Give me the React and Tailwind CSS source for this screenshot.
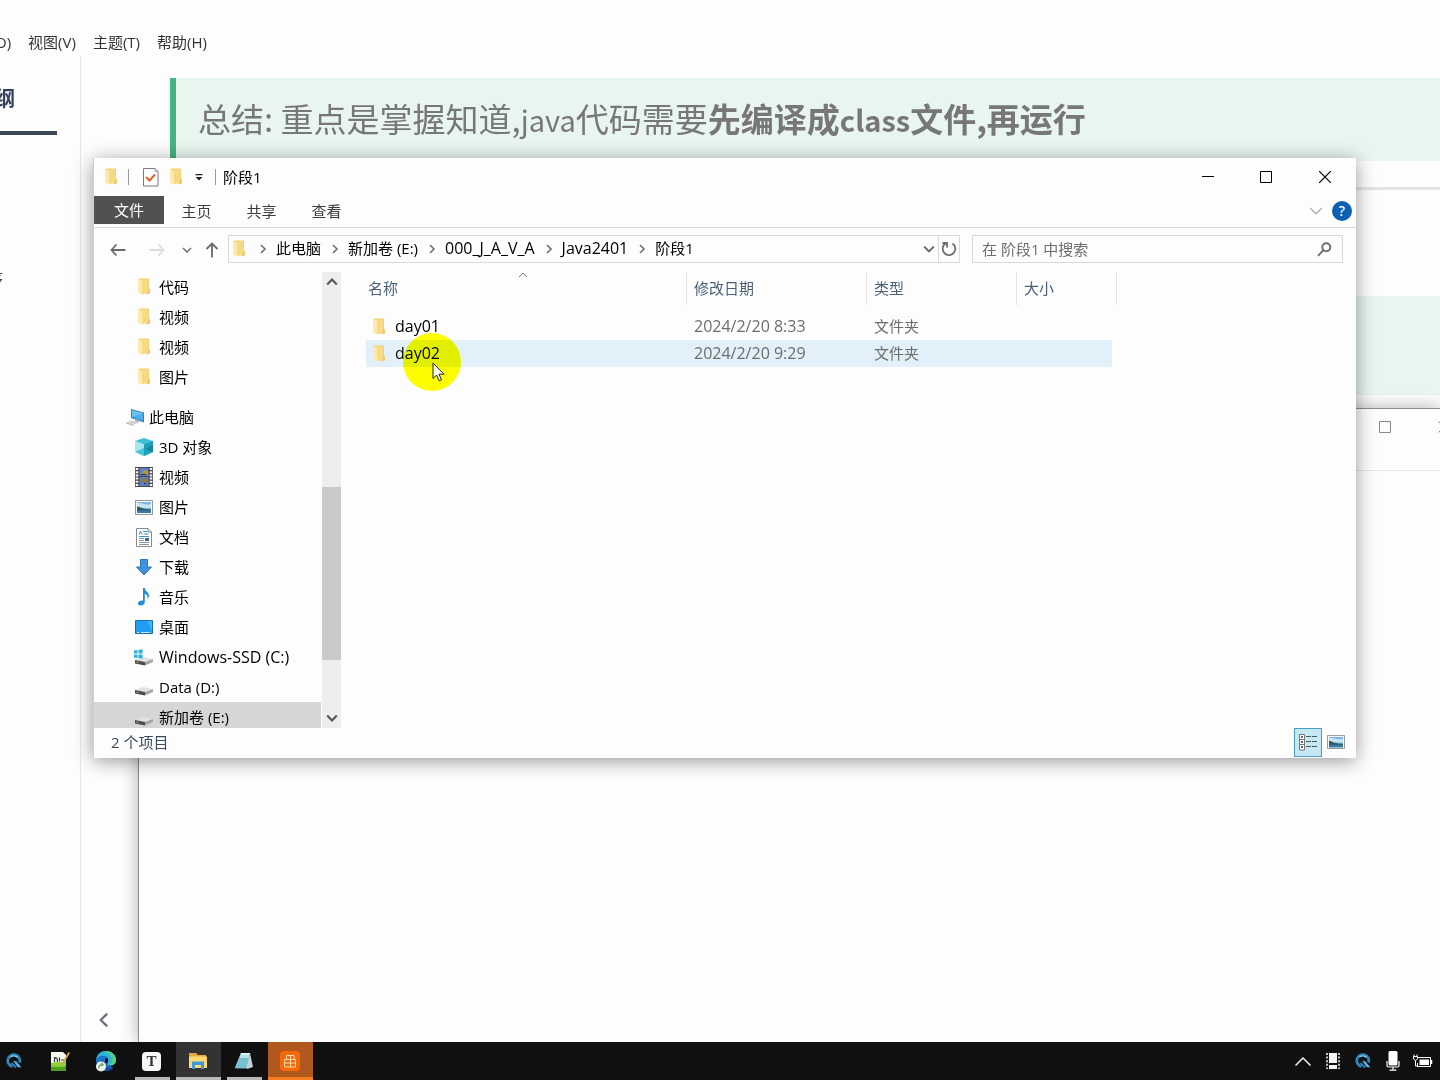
import React from "react";

const cjk = "font-['Noto_Sans_CJK_SC',sans-serif]";
const ui = "font-['Open_Sans','Noto_Sans_CJK_SC',sans-serif]";

function Folder({ className = "" }) {
  return (
    <svg className={`shrink-0 ${className}`} width="16" height="18" viewBox="0 0 16 18" aria-hidden="true">
      <path d="M3 .5h10V15H3z" fill="#efd27a" />
      <path d="M12 10.500l2 1v4l-4 1z" fill="#ecc968" />
      <path d="M2 .5l4 2.500v13.500l-4-2z" fill="#ffe9ac" />
      <path d="M6 3l1-1.500h5v13l-6 2z" fill="#f7da84" />
    </svg>
  );
}

function Chevron({ dir = "right", size = 10, color = "#666", w = 1.6, className = "" }) {
  const d = { right: "M3 1l4 4-4 4", down: "M1 3l4 4 4-4", up: "M1 7l4-4 4 4", left: "M7 1L3 5l4 4" }[dir];
  return (
    <svg className={`shrink-0 ${className}`} width={size} height={size} viewBox="0 0 10 10" fill="none" stroke={color} strokeWidth={w} aria-hidden="true">
      <path d={d} />
    </svg>
  );
}

function PcIcon() {
  return (
    <svg width="20" height="18" viewBox="0 0 20 18" aria-hidden="true">
      <path d="M5 1l13 3.500v10L5 10z" fill="#2f7fb8" />
      <path d="M6 2.200l11 3v7.600L6 9.200z" fill="#4baee8" />
      <path d="M6 2.200l11 3-11 3.500z" fill="#6fc1f2" />
      <path d="M9 11l4 1v2.500l-4-1z" fill="#a9b6bd" />
      <path d="M-1 14.500l8-2 6 2.200-6 2.300z" fill="#d2d2d2" />
      <path d="M0 14.500l7 2.500v1L0 15.300z" fill="#adadad" />
    </svg>
  );
}

function CubeIcon() {
  return (
    <svg width="18" height="18" viewBox="0 0 18 18" aria-hidden="true">
      <path d="M9 0l9 3-9 3.500L0 3z" fill="#3cc0d6" />
      <path d="M0 3l9 3.500V18l-9-4z" fill="#a9e6ef" />
      <path d="M9 6.500L18 3v11l-9 4z" fill="#14829c" />
      <path d="M0 14l9-4 9 4-9 4z" fill="#1fb4cd" opacity=".7" />
      <path d="M9 6.500L18 3v4L9 12z" fill="#1ba0ba" />
    </svg>
  );
}

function VideoIcon() {
  return (
    <svg width="18" height="20" viewBox="0 0 18 20" aria-hidden="true">
      <path d="M0 0h18v20H0z" fill="#49474a" />
      <path d="M2 1v18M16 1v18" stroke="#f4f4f4" strokeWidth="2.600" strokeDasharray="2 1.200" />
      <path d="M4.500 1h9v8h-9zM4.500 10h9v9h-9z" fill="#5b80c8" />
      <path d="M7 5l3-2 3 1v4H8z" fill="#b09a3e" />
      <path d="M5 13l4-2 4 1v3l-4 1z" fill="#8d7a3c" />
      <path d="M6 8l3-1 2 1M9 17l2-1" stroke="#222" fill="none" />
    </svg>
  );
}

function PictureIcon({ small }) {
  return (
    <svg width={18} height={small ? 14 : 15} viewBox="0 0 18 15" preserveAspectRatio="none" aria-hidden="true">
      <path d="M.5.5h17v14H.5z" fill="#fff" stroke="#8e979c" />
      <path d="M2 2h14v11H2z" fill="#7bb5e4" />
      <path d="M2 3c4-1 8 3 14 1v4H2z" fill="#c6e2f4" />
      <path d="M2 6.500c4 0 5 3 14 3V13H2z" fill="#2f5f5b" />
      <path d="M2 11c5-1 10 0 14-.5V13H2z" fill="#3d78aa" />
    </svg>
  );
}

function DocIcon() {
  return (
    <svg width="16" height="19" viewBox="0 0 16 19" aria-hidden="true">
      <path d="M.5.500h11.500l3.500 3.500v14.500H.500z" fill="#fff" stroke="#858b90" />
      <path d="M12 .5V4h3.500" fill="#dde2e5" stroke="#858b90" />
      <path d="M3 6.500l1.500-3.500L6 6.500M7 3.500h4M7.500 6h5M3 8.500h10" stroke="#3c8fc9" fill="none" />
      <path d="M3 10.500h5M3 12.500h5M3 14.500h10M3 16.500h10" stroke="#8097a6" />
      <path d="M9 10h4v3H9z" fill="#41637c" />
    </svg>
  );
}

function DownloadIcon() {
  return (
    <svg width="16" height="17" viewBox="0 0 16 17" aria-hidden="true">
      <path d="M4.500.500h7V8h4L8 16 .500 8h4z" fill="#3f92dc" stroke="#2f78bd" strokeLinejoin="round" />
    </svg>
  );
}

function MusicIcon() {
  return (
    <svg width="14" height="18" viewBox="0 0 14 18" aria-hidden="true">
      <path d="M6 0h1.800c0 3 4.200 4.500 4.200 7.500 0 1.500-.6 2.500-1.600 3.500.8-3-.6-4.600-2.600-5.200V14c0 2-1.800 3.500-4 3.500S.5 16.200 1 14.700 3.500 12 6 12.500z" fill="#2390d4" />
    </svg>
  );
}

function DesktopIcon() {
  return (
    <svg width="18" height="14" viewBox="0 0 18 14" aria-hidden="true">
      <path d="M.5.500h17v13H.500z" fill="#1e9df2" stroke="#1670ad" />
      <path d="M12 1h5v10z" fill="#45b2f8" />
      <path d="M2 12.500h2M6 12.500h8M15 12.500h1" stroke="#c9e9ff" />
    </svg>
  );
}

function DriveIcon({ win }) {
  return (
    <svg width="20" height="18" viewBox="0 0 20 18" aria-hidden="true">
      <path d="M1 12l8-3 10 2-8 3z" fill="#e2e2e2" />
      <path d="M1 12l10 2v3.500L1 15.500z" fill="#4b4b4b" />
      <path d="M11 14l8-3v3l-8 3.500z" fill="#a6a6a6" />
      <path d="M2.500 14l2 .4" stroke="#7fd37f" />
      {win && (
        <g>
          <path d="M0 1h9v9H0z" fill="#fdfdfd" />
          <path d="M0 2.500l3.500-.5v3.500H0zM4.500 1.900l4-.6v4.200h-4zM0 6.500h3.500V10L0 9.500zM4.500 6.500h4v4.200l-4-.6z" fill="#29b0dc" />
        </g>
      )}
    </svg>
  );
}

const quick = ["代码", "视频", "视频", "图片"];
const places = [
  ["3D 对象", <CubeIcon />],
  ["视频", <VideoIcon />],
  ["图片", <PictureIcon />],
  ["文档", <DocIcon />],
  ["下载", <DownloadIcon />],
  ["音乐", <MusicIcon />],
  ["桌面", <DesktopIcon />],
  ["Windows-SSD (C:)", <DriveIcon win />, "text-[16px]"],
  ["Data (D:)", <DriveIcon />],
  ["新加卷 (E:)", <DriveIcon />],
];

function TreeRow({ icon, label, root, selected, size = "text-[15px]" }) {
  return (
    <li>
      <a
        href="#"
        className={`flex h-[30px] items-center whitespace-nowrap ${root ? "pl-8" : "pl-10"} ${selected ? "bg-[#d6d6d6]" : ""}`}
      >
        <span className={`flex w-5 shrink-0 items-center justify-center ${root ? "mr-[3px]" : "mr-[5px]"}`}>{icon}</span>
        <span className={`leading-[30px] ${size}`}>{label}</span>
      </a>
    </li>
  );
}

function Editor() {
  return (
    <div className={`absolute inset-0 flex flex-col ${cjk}`}>
      <div className="h-7" />
      <nav className={`flex h-7 items-center gap-[17px] text-[15px] text-[#333] ${ui}`}>
        <button className="-ml-[5px]">O)</button>
        <button>视图(V)</button>
        <button>主题(T)</button>
        <button>帮助(H)</button>
      </nav>
      <div className="flex flex-1">
        <aside className="flex w-[81px] shrink-0 flex-col border-r border-[#e6e6e6]">
          <div className="mr-[23px] border-b-4 border-[#3b4754] pt-[26px] pb-[17px]">
            <h2 className="-ml-[5px] text-[20px] leading-8 font-bold text-[#33405e]">纲</h2>
          </div>
          <p className="-ml-3 mt-[131px] text-[15px] leading-6 text-[#33405e]">序</p>
          <div className="flex-1" />
        </aside>
        <main className="flex-1 pt-[22px] pl-[89px]">
          <blockquote className="flex h-[83px] items-center border-l-6 border-[#43b581] bg-[#e9f5ef] pb-0.5 pl-[22px] text-[33px] whitespace-nowrap text-[#777]">
            <p>
              总结: 重点是掌握知道,<span className="text-[29px]">java</span>代码需要
              <strong className="font-bold">
                先编译成<span className="text-[29px]">class</span>文件,再运行
              </strong>
            </p>
          </blockquote>
          <hr className="mt-[26px] h-[3px] border-0 bg-[#e3e3e3]" />
          <div className="mt-[106px] h-[99px] border-l-6 border-[#43b581] bg-[#e9f5ef]" />
        </main>
      </div>
      <button aria-label="收起侧栏" className="absolute bottom-3.5 left-24">
        <Chevron dir="left" size={16} color="#6c6f7a" w={1.4} />
      </button>
    </div>
  );
}

function BackWindow() {
  return (
    <section className="absolute top-[408px] right-0 bottom-0 left-[138px] border-t border-l border-[#8c8c8c] bg-[#fdfdfd] shadow-[0_0_16px_rgba(0,0,0,0.3)]">
      <div className="flex h-[62px] items-start justify-end overflow-hidden border-b border-[#e4e4e4] pt-3">
        <button aria-label="最大化" className="mr-[47px]">
          <svg width="12" height="12" viewBox="0 0 12 12" fill="none" stroke="#888"><path d="M.5.500h11v11H.500z" /></svg>
        </button>
        <button aria-label="关闭" className="-mr-2.5">
          <svg width="12" height="12" viewBox="0 0 12 12" fill="none" stroke="#888"><path d="M.5.500l11 11M11.500.500l-11 11" /></svg>
        </button>
      </div>
    </section>
  );
}

function TitleBar() {
  return (
    <header className="flex h-[38px] items-center pl-[9px]">
      <Folder />
      <span className="ml-[9px] h-4 w-px bg-[#999]" />
      <button aria-label="属性" className="ml-[14px]">
        <svg width="16" height="19" viewBox="0 0 16 19" fill="none" aria-hidden="true">
          <path d="M.5.500h11.500l3 3v14.500H.500z" fill="#fff" stroke="#777986" />
          <path d="M12 .5v3h3" stroke="#aaa" />
          <path d="M3 9l3.500 3.500L12 6.500" stroke="#d9632a" strokeWidth="2" />
        </svg>
      </button>
      <button aria-label="新建文件夹" className="ml-[9px]"><Folder /></button>
      <button aria-label="自定义快速访问工具栏" className="ml-[11px]">
        <svg width="8" height="8" viewBox="0 0 8 8" aria-hidden="true"><path d="M.5 1h7v1.200h-7zM.5 4h7L4 7.500z" fill="#222" /></svg>
      </button>
      <span className="ml-[12px] h-4 w-px bg-[#999]" />
      <h1 className="ml-[7px] text-[15px] text-black">阶段1</h1>
      <div className="ml-auto flex items-center pr-[25px]">
        <button aria-label="最小化" className="mr-[46px]">
          <svg width="12" height="12" viewBox="0 0 12 12" stroke="#000"><path d="M0 5.500h12" /></svg>
        </button>
        <button aria-label="最大化" className="mr-[47px]">
          <svg width="12" height="12" viewBox="0 0 12 12" stroke="#000" fill="none"><path d="M.5.500h11v11H.500z" /></svg>
        </button>
        <button aria-label="关闭">
          <svg width="12" height="12" viewBox="0 0 12 12" stroke="#000" strokeWidth="1.200" fill="none"><path d="M0 0l12 12M12 0L0 12" /></svg>
        </button>
      </div>
    </header>
  );
}

function Ribbon() {
  return (
    <div className="flex h-8 items-start border-b border-[#dadbdc] text-[15px] text-[#3c3c3c]">
      <button className="h-7 w-[70px] bg-[#515151] text-white">文件</button>
      {["主页", "共享", "查看"].map((t) => (
        <button key={t} className="h-[30px] w-[65px]">{t}</button>
      ))}
      <div className="ml-auto flex h-[30px] items-center gap-[9px] pr-1">
        <button aria-label="展开功能区"><Chevron dir="down" size={14} color="#aaa" w={0.9} /></button>
        <button aria-label="帮助" className="flex h-5 w-5 items-center justify-center rounded-full bg-[#0c60b4] text-[14px] leading-5 font-semibold text-white">?</button>
      </div>
    </div>
  );
}

const crumbs = [
  ["此电脑", "text-[15px]"],
  ["新加卷 (E:)", "text-[15px]"],
  ["000_J_A_V_A", "text-[16px]"],
  ["Java2401", "text-[16px]"],
  ["阶段1", "text-[15px]"],
];

function AddressBar() {
  return (
    <div className="flex h-11 items-center pr-[13px] pb-0.5">
      <div className="flex w-[134px] shrink-0 items-center pt-0.5 pl-4">
        <button aria-label="后退">
          <svg width="16" height="14" viewBox="0 0 16 14" fill="none" stroke="#6b6b6b" strokeWidth="1.800"><path d="M15.500 7H1.500M6.500 1.500L1.500 7l5 5.500" /></svg>
        </button>
        <button aria-label="前进" className="ml-[23px]">
          <svg width="16" height="14" viewBox="0 0 16 14" fill="none" stroke="#dcdcdc" strokeWidth="1.800"><path d="M.5 7h14M9.500 1.500l5 5.500-5 5.500" /></svg>
        </button>
        <button aria-label="最近浏览的位置" className="ml-[17px]"><Chevron dir="down" color="#777" /></button>
        <button aria-label="上移" className="ml-[13px]">
          <svg width="14" height="16" viewBox="0 0 14 16" fill="none" stroke="#6b6b6b" strokeWidth="1.800"><path d="M7 15.500V1.500M1.500 7L7 1.500 12.500 7" /></svg>
        </button>
      </div>
      <div className="flex h-7 min-w-0 flex-1 items-center border border-[#d9d9d9] pl-0.5 text-black">
        <Folder />
        <ol className="flex min-w-0 items-center pl-0.5 whitespace-nowrap">
          {crumbs.map(([p, size], i) => (
            <li key={p} className="flex items-center">
              <Chevron className="mr-2 ml-[9px]" color="#707070" />
              <a href="#" className={`leading-6 pb-0.5 ${size}`}>{p}</a>
            </li>
          ))}
        </ol>
        <button aria-label="以前的位置" className="ml-auto flex h-full w-[18px] items-center justify-center"><Chevron dir="down" size={12} color="#666" /></button>
        <button aria-label="刷新" className="flex h-full w-[21px] items-center justify-center border-l border-[#d9d9d9]">
          <svg width="16" height="16" viewBox="0 0 16 16" fill="none" stroke="#6d6d6d" strokeWidth="1.800"><path d="M11.500 2.500A6.300 6.300 0 1 1 5 2.200M1.500 2H6v4.500" /></svg>
        </button>
      </div>
      <label className="ml-3 flex h-7 w-[371px] shrink-0 items-center border border-[#d9d9d9] pr-2.5 pl-[9px]">
        <input
          aria-label="搜索"
          placeholder="在 阶段1 中搜索"
          className="min-w-0 flex-1 bg-transparent text-[15px] text-[#6d6d6d] outline-none placeholder:text-[#6d6d6d]"
        />
        <svg width="15" height="15" viewBox="0 0 15 15" fill="none" stroke="#6d6d6d" strokeWidth="1.900" aria-hidden="true"><circle cx="9.300" cy="5.300" r="4" /><path d="M6.500 8.200L1 13.800" /></svg>
      </label>
    </div>
  );
}

function FileTable() {
  const th = "h-[33px] border-r border-[#e3e3e3] pl-[7px] leading-[33px]";
  return (
    <table className="table-fixed border-collapse text-left text-[15px]">
      <colgroup>
        <col className="w-[321px]" />
        <col className="w-[180px]" />
        <col className="w-[150px]" />
        <col className="w-[95px]" />
        <col className="w-[5px]" />
      </colgroup>
      <thead className="text-[#4c607a]">
        <tr className="h-[41px] align-top">
          <th className="relative p-0 font-normal">
            <div className="h-[33px] border-r border-[#e3e3e3] pl-0.5 leading-[33px]">名称</div>
            <Chevron dir="up" color="#777" w={1} className="absolute -top-0.5 left-[152px]" />
          </th>
          <th className="p-0 font-normal"><div className={th}>修改日期</div></th>
          <th className="p-0 font-normal"><div className={th}>类型</div></th>
          <th colSpan={2} className="p-0 font-normal"><div className={th}>大小</div></th>
        </tr>
      </thead>
      <tbody className="text-[#6d6d6d]">
        {[["day01", "2024/2/20 8:33"], ["day02", "2024/2/20 9:29"]].map(([n, d], i) => (
          <tr key={n} className={i ? "bg-[#e2f0fa]" : ""}>
            <td className="h-[27px] p-0">
              <span className="flex items-center pl-[5px] text-[16px] leading-[27px] text-black">
                <Folder className="mr-2" />
                {n}
              </span>
            </td>
            <td className="p-0 pl-[7px] text-[16px] leading-[27px]">{d}</td>
            <td className="p-0 pl-[7px] leading-[27px]">文件夹</td>
            <td className="p-0" />
          </tr>
        ))}
      </tbody>
    </table>
  );
}

function Pointer() {
  return (
    <>
      <span className="pointer-events-none absolute top-[61px] left-[58px] h-[58px] w-[58px] rounded-full bg-[#ffff00] mix-blend-multiply" />
      <svg className="pointer-events-none absolute top-[90px] left-[87px]" width="13" height="20" viewBox="0 0 13 20" aria-hidden="true">
        <path d="M1 1v15.500l3.600-3.400 2.500 5.700 2.400-1-2.500-5.600h5z" fill="#fff" stroke="#222" />
      </svg>
    </>
  );
}

function Explorer() {
  return (
    <section className={`absolute top-[158px] right-[84px] left-[93px] border-l border-[#d0d0d0] bg-[#fdfdfd] shadow-[0_3px_18px_rgba(0,0,0,0.4)] ${ui}`}>
      <TitleBar />
      <Ribbon />
      <AddressBar />
      <div className="flex h-[456px]">
        <nav className="w-[227px] shrink-0 overflow-hidden text-black">
          <ul>
            {quick.map((q, i) => (
              <TreeRow key={i} icon={<Folder />} label={q} />
            ))}
          </ul>
          <ul className="mt-2.5">
            <TreeRow root icon={<PcIcon />} label="此电脑" />
            {places.map(([label, icon, size], i) => (
              <TreeRow key={label} icon={icon} label={label} size={size} selected={i === places.length - 1} />
            ))}
          </ul>
        </nav>
        <div className="ml-px flex w-[19px] shrink-0 flex-col items-center bg-[#eeeeee]">
          <button aria-label="向上滚动" className="flex h-5 items-center"><Chevron dir="up" size={12} color="#555" w={1.8} /></button>
          <div className="flex-[195]" />
          <div className="w-full flex-[173] bg-[#cacaca]" />
          <div className="flex-[48]" />
          <button aria-label="向下滚动" className="flex h-5 items-center"><Chevron dir="down" size={12} color="#555" w={1.8} /></button>
        </div>
        <div className="relative ml-1 flex-1 pl-[21px]">
          <FileTable />
          <div className="absolute top-0 left-0"><Pointer /></div>
        </div>
      </div>
      <footer className="flex h-[30px] items-center pb-0.5 pl-[17px] text-[15px] text-[#3b4a5e]">
        2 个项目
        <button aria-label="详细信息" className="ml-auto flex h-[29px] w-7 items-center justify-center border border-[#4a9ebb] bg-[#c4e9f5]">
          <svg width="18" height="17" viewBox="0 0 18 17" fill="none" aria-hidden="true">
            <path d="M.5.500h5v15.500h-5zM.5 5.500h5M.5 10.500h5" fill="#fff" stroke="#777" />
            <path d="M2 3h2M2 8h2M2 13h2" stroke="#333" strokeWidth="1.500" />
            <path d="M7 2.500h5M13 2.500h5M7 7.500h5M13 7.500h5M7 12.500h5M13 12.500h5" stroke="#555" />
          </svg>
        </button>
        <button aria-label="大缩略图" className="mr-[11px] ml-[5px]"><PictureIcon small /></button>
      </footer>
    </section>
  );
}

function QIcon() {
  return (
    <svg width="16" height="16" viewBox="0 0 16 16" fill="none" aria-hidden="true">
      <path d="M13.500 9.500A6 6 0 1 0 6.500 13.500" stroke="#2f86bf" strokeWidth="2.800" />
      <path d="M4.500 4A5 5 0 0 1 11.500 4.500" stroke="#8ccdf0" strokeWidth="1.200" />
      <path d="M7 7.500l3.500 1 5 6-4-.5z" fill="#5fb0e0" />
      <path d="M5.500 10l4.500 4.500" stroke="#2f86bf" strokeWidth="1.800" />
    </svg>
  );
}

function TaskButton({ label, children, line, className = "" }) {
  return (
    <button aria-label={label} className={`relative flex h-full w-[45px] items-center justify-center pr-0.5 ${className}`}>
      {children}
      {line && <span className={`absolute bottom-0 h-[3px] ${line}`} />}
    </button>
  );
}

function Taskbar() {
  return (
    <footer className="flex h-[38px] shrink-0 items-center justify-between bg-[#101010]">
      <div className="-ml-2 flex h-full gap-px">
        <TaskButton label="浏览器"><QIcon /></TaskButton>
        <TaskButton label="Notepad++">
          <svg width="20" height="21" viewBox="0 0 20 21" aria-hidden="true">
            <path d="M1 1h12l3 3v16H1z" fill="#f6f8f0" />
            <path d="M1 12c5-2 10 1 15-3v11H1z" fill="#8fd03a" />
            <path d="M1 16c5-1 10 1 15-1v5H1z" fill="#4fa01d" />
            <path d="M4.500 11V6M4.500 7.500Q7.500 5 7.500 11M9.500 6.500v4M11 9h3" stroke="#333" strokeWidth="1.200" fill="none" />
            <path d="M18.500 1L12.500 11l-1 3.500 2.500-2.500L20 2z" fill="#d7a63d" />
          </svg>
        </TaskButton>
        <TaskButton label="Edge">
          <svg width="22" height="22" viewBox="0 0 22 22" aria-hidden="true">
            <path d="M1 11C1 5 5.500 1 11 1s10 4 10 9c0 4-3 6-6 6l3 2c-2 2.500-5 3-7 3C5 21 1 16.500 1 11z" fill="#1b74c9" />
            <path d="M1 10C2 4 6 1 11 1c6 0 10 4 10 9 0 3-2.500 5-5 5-2 0-4-.8-4-2 0-.7 1.200-1 1.200-2.800C13 7 10.500 5.800 8 5.800 4.500 5.800 2 7.500 1 10z" fill="#2fb4d6" />
            <path d="M11 1c6 0 10 4 10 9 0 3-2.500 5-5 5-1 0-2-.2-3-.8 4 0 5-3 4-6.200C16 5 14 3 9 1.200z" fill="#54cf7d" />
            <path d="M12.500 14c-.8-1 .7-2 .7-3.800 0-1-.4-1.800-1-2.500-2 .3-3.200 3.300-1.200 5.300z" fill="#101010" />
            <path d="M8 9.500C7 15 11 18.500 18 17.500c-1.500 2.500-5 3.500-7 3.500-4-1-6-7-3-11.500z" fill="#114a9e" />
            <circle cx="6" cy="16.500" r="5" fill="#f2f2f2" />
            <path d="M4 18.500c-1-2 1-4 4-4M6 13l2 1.500L6.500 16" stroke="#4fa446" strokeWidth="1.200" fill="none" />
          </svg>
        </TaskButton>
        <TaskButton label="Typora" line="inset-x-[5px] bg-[#b9b9b9]">
          <span className="flex h-[19px] w-[19px] items-center justify-center rounded-[4px] bg-[#f7f7f7] font-['Liberation_Serif',serif] text-[15px] leading-[19px] font-bold text-[#333]">T</span>
        </TaskButton>
        <TaskButton label="文件资源管理器" className="bg-[#333333]" line="inset-x-0 bg-[#b9b9b9]">
          <svg width="20" height="18" viewBox="0 0 20 18" aria-hidden="true">
            <path d="M1 1h7l2 2h8v4H1z" fill="#e3a93a" />
            <path d="M1 4.500h18V16H1z" fill="#fbd873" />
            <path d="M4 9.500h12V17h-3v-4H7v4H4z" fill="#3f9bd8" />
          </svg>
        </TaskButton>
        <TaskButton label="记事本" line="inset-x-[5px] bg-[#b9b9b9]">
          <svg width="20" height="19" viewBox="0 0 20 19" aria-hidden="true">
            <path d="M7 1h9l-4 15H1z" fill="#b5e1ea" />
            <path d="M5 6h10l-3 10H1z" fill="#78bfd0" />
            <path d="M16 1l3 14-6 2-1-1z" fill="#c9d0d3" />
            <path d="M7 1h9v1.500H6.500z" fill="#e4f4f7" />
            <path d="M1 16h11l1 1H2z" fill="#3c5b66" />
          </svg>
        </TaskButton>
        <TaskButton label="录屏" className="bg-[#b0581d]" line="inset-x-0 bg-[#f57c1f]">
          <svg width="20" height="20" viewBox="0 0 20 20" fill="none" aria-hidden="true">
            <rect width="20" height="20" rx="4" fill="#f5690a" />
            <path d="M6.500 4.500h7.500v4H6.500zM10.500 4.500v11.500M4.500 8.500h11V16h-11zM4.500 12h11" stroke="#ffdcae" />
          </svg>
        </TaskButton>
      </div>
      <div className="flex h-full items-center pr-0.5">
        <button aria-label="显示隐藏的图标" className="flex w-[30px] justify-center">
          <svg width="16" height="9" viewBox="0 0 16 9" fill="none" stroke="#eee" strokeWidth="1.500"><path d="M.5 8.500L8 1l7.500 7.500" /></svg>
        </button>
        <button aria-label="录像" className="flex w-[30px] justify-center">
          <svg width="14" height="16" viewBox="0 0 14 16"><path d="M3 0h8v10H3zM3 12h8v4H3z" fill="#f4f4f4" /><path d="M1 0v16M13 0v16" stroke="#f4f4f4" strokeWidth="1.600" strokeDasharray="2 1.600" /></svg>
        </button>
        <button aria-label="浏览器" className="flex w-[30px] justify-center"><QIcon /></button>
        <button aria-label="麦克风" className="flex w-[30px] justify-center">
          <svg width="14" height="20" viewBox="0 0 14 20" fill="none"><rect x="2.500" width="9" height="14.500" rx="1.500" fill="#fff" /><path d="M1 10v4.500q0 1.500 1.500 1.500h9q1.500 0 1.500-1.500V10M7 16v3M3.500 19.200h7" stroke="#fff" strokeWidth="1.200" /></svg>
        </button>
        <button aria-label="电源" className="flex w-[30px] justify-center">
          <svg width="20" height="14" viewBox="0 0 20 14" fill="none"><path d="M5 3.500h12.500v9H4.500V9" stroke="#fff" /><path d="M6.500 5.500H16v5.500H6.500z" fill="#fff" /><path d="M18.500 6v4" stroke="#fff" strokeWidth="1.500" /><path d="M1 .5v2M4 .5v2M.5 2.500h4v2.500l-2 1.500-2-1.500zM2.500 6v6H5" stroke="#fff" /></svg>
        </button>
      </div>
    </footer>
  );
}

export default function App() {
  return (
    <div className="flex h-screen flex-col overflow-hidden bg-[#fdfdfd]">
      <div className="relative flex-1 overflow-hidden">
        <Editor />
        <BackWindow />
        <Explorer />
      </div>
      <Taskbar />
    </div>
  );
}
